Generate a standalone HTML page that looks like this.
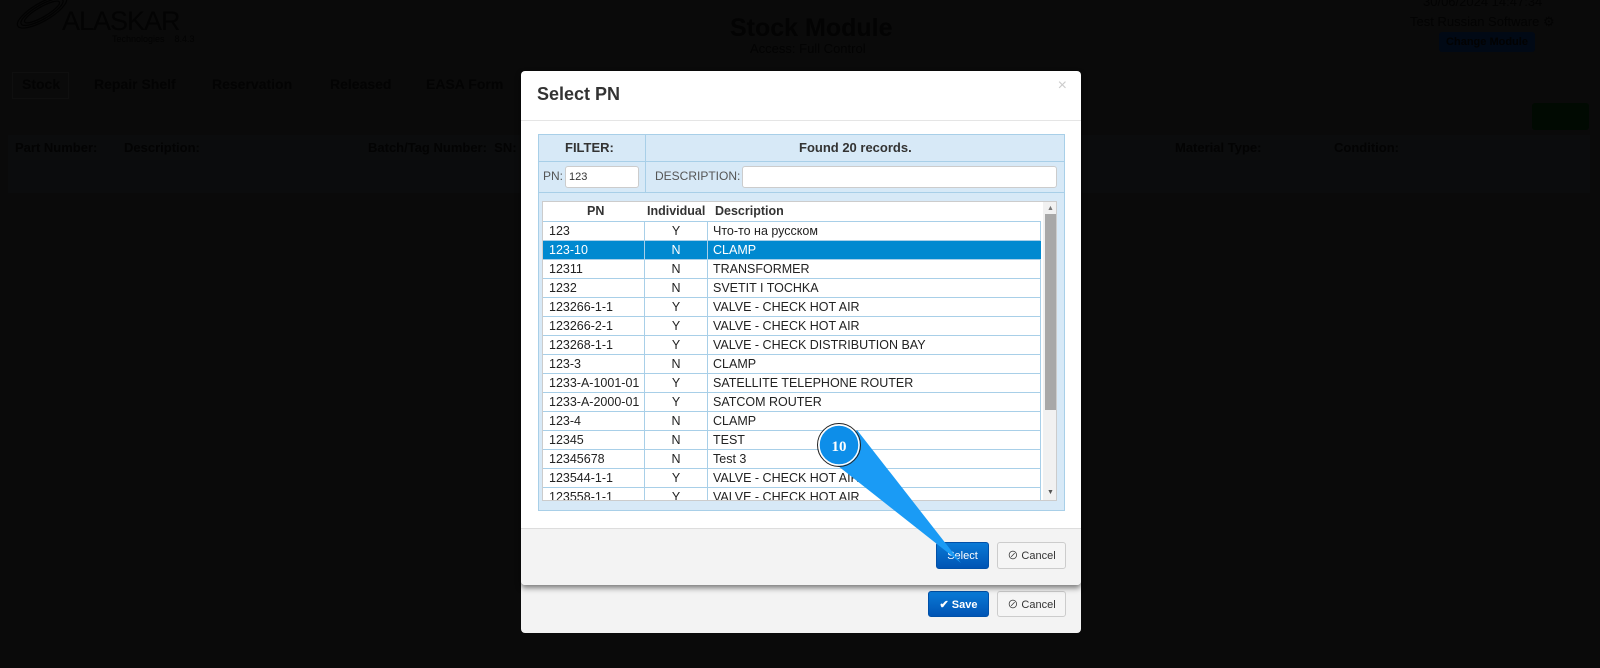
<!DOCTYPE html>
<html><head><meta charset="utf-8"><style>
*{box-sizing:border-box;margin:0;padding:0}
body{width:1600px;height:668px;background:#0a0a0a;font-family:"Liberation Sans","Noto Sans CJK SC",sans-serif;position:relative;overflow:hidden;color:#333}
.a{position:absolute}
.bg{color:#030303}
.modal{position:absolute;left:521px;width:560px;background:#fff;border-radius:4px}
.grid{position:absolute;left:542px;top:201px;width:515px;height:300px;background:#fff;border:1px solid #ccc;overflow:hidden}
.row{position:absolute;left:0;height:19px;width:498px;font-size:12.5px;color:#222;border-bottom:1px solid #a8cfe8}
.row span{position:absolute;top:2px}
.row .c1{left:6px}.row .c2{left:102px;width:62px;text-align:center}.row .c3{left:170px}
.row .v1{position:absolute;left:101px;top:0;bottom:0;border-left:1px solid #a8cfe8}
.row .v2{position:absolute;left:164px;top:0;bottom:0;border-left:1px solid #a8cfe8}
.sel{background:#0089d0;color:#fff}
.btn{position:absolute;font-size:11px;border-radius:3px;text-align:center;line-height:26px}
.tab{position:absolute;top:76px;font-size:14px;font-weight:bold;color:#030303}
</style></head><body>
<svg class="a" style="left:12px;top:0" width="70" height="30"><g fill="none" stroke="#020202" stroke-width="1.2"><ellipse cx="30" cy="12" rx="28" ry="9" transform="rotate(-30 30 12)"/><ellipse cx="30" cy="12" rx="24" ry="7" transform="rotate(-30 30 12)"/><ellipse cx="30" cy="12" rx="20" ry="5" transform="rotate(-30 30 12)"/></g></svg>
<div class="a bg" style="left:62px;top:6px;font-size:27px;letter-spacing:-1px">ALASKAR</div>
<div class="a bg" style="left:112px;top:34px;font-size:9px">Technologies &nbsp;&nbsp; 8.4.3</div>
<div class="a bg" style="left:730px;top:14px;font-size:25px;font-weight:bold">Stock Module</div>
<div class="a bg" style="left:750px;top:41px;font-size:13px">Access: Full Control</div>
<div class="a bg" style="left:1423px;top:-6px;font-size:13px">30/06/2024 14:47:34</div>
<div class="a bg" style="left:1410px;top:14px;font-size:13px">Test Russian Software ⚙</div>
<div class="a" style="left:1439px;top:32px;width:96px;height:20px;background:#010915;border-radius:3px;color:#020202;font-size:11px;font-weight:bold;text-align:center;line-height:20px">Change Module</div>
<div class="a" style="left:12px;top:72px;width:57px;height:27px;border:1px solid #0f0f0f"></div>
<div class="tab" style="left:22px">Stock</div>
<div class="tab" style="left:94px">Repair Shelf</div>
<div class="tab" style="left:212px">Reservation</div>
<div class="tab" style="left:330px">Released</div>
<div class="tab" style="left:426px">EASA Form</div>
<div class="a" style="left:1532px;top:103px;width:57px;height:27px;background:#010a02;border-radius:3px"></div>
<div class="a" style="left:8px;top:135px;width:1582px;height:58px;background:#0b0c0d"></div>
<div class="a bg" style="left:15px;top:140px;font-size:13px;font-weight:bold">Part Number:</div>
<div class="a bg" style="left:124px;top:140px;font-size:13px;font-weight:bold">Description:</div>
<div class="a bg" style="left:368px;top:140px;font-size:13px;font-weight:bold">Batch/Tag Number:&nbsp; SN:</div>
<div class="a bg" style="left:1175px;top:140px;font-size:13px;font-weight:bold">Material Type:</div>
<div class="a bg" style="left:1334px;top:140px;font-size:13px;font-weight:bold">Condition:</div>

<div class="modal" style="top:560px;height:73px;background:#f3f3f3"></div>
<div class="btn" style="left:928px;top:591px;width:61px;height:26px;background:linear-gradient(#0a7ad6,#0054b4);color:#fff;font-weight:bold;border:1px solid #0050a8">✔ Save</div>
<div class="btn" style="left:997px;top:591px;width:69px;height:26px;background:#f5f5f5;border:1px solid #ccc;color:#333">⊘ Cancel</div>

<div class="modal" style="top:71px;height:514px;box-shadow:0 3px 6px rgba(0,0,0,.5)">
 <div class="a" style="left:16px;top:13px;font-size:18px;font-weight:bold;color:#333">Select PN</div>
 <div class="a" style="right:14px;top:6px;font-size:16px;color:#ccc">×</div>
 <div class="a" style="left:0;right:0;top:49px;border-top:1px solid #e5e5e5"></div>
 <div class="a" style="left:0;right:0;top:457px;bottom:0;background:#f3f3f3;border-top:1px solid #ddd;border-radius:0 0 4px 4px"></div>
</div>
<div class="a" style="left:538px;top:134px;width:527px;height:377px;background:#d7e9f7;border:1px solid #a8cfe8"></div>
<div class="a" style="left:538px;top:161px;width:527px;border-top:1px solid #a8cfe8"></div>
<div class="a" style="left:538px;top:192px;width:527px;border-top:1px solid #a8cfe8"></div>
<div class="a" style="left:645px;top:134px;height:58px;border-left:1px solid #a8cfe8"></div>
<div class="a" style="left:565px;top:140px;font-size:13px;font-weight:bold;color:#333">FILTER:</div>
<div class="a" style="left:799px;top:140px;font-size:13px;font-weight:bold;color:#333">Found 20 records.</div>
<div class="a" style="left:543px;top:169px;font-size:12px;color:#555">PN:</div>
<div class="a" style="left:565px;top:166px;width:74px;height:22px;background:#fff;border:1px solid #ccc;border-radius:3px;font-size:11px;padding:4px 3px;color:#333">123</div>
<div class="a" style="left:655px;top:169px;font-size:12px;color:#555">DESCRIPTION:</div>
<div class="a" style="left:742px;top:166px;width:315px;height:22px;background:#fff;border:1px solid #ccc;border-radius:3px"></div>

<div class="grid">
 <div class="a" style="left:0;top:0;width:498px;height:19px;font-size:12.5px;font-weight:bold;color:#333"><span class="a" style="left:44px;top:2px">PN</span><span class="a" style="left:104px;top:2px">Individual</span><span class="a" style="left:172px;top:2px">Description</span></div>
 <div class="a" style="left:500px;top:0;width:15px;height:300px;background:#f1f1f1"></div>
 <div class="a" style="left:502px;top:12px;width:11px;height:196px;background:#a8a8a8"></div>
 <div class="a" style="left:504px;top:3px;font-size:7px;color:#777">▲</div>
 <div class="a" style="left:504px;top:287px;font-size:7px;color:#555">▼</div>
 <div class="a" style="left:0;top:19px;width:498px;height:281px;border-top:1px solid #a8cfe8;border-right:1px solid #a8cfe8"></div>
 <div class="row" style="top:20px"><i class="v1"></i><i class="v2"></i><span class="c1">123</span><span class="c2">Y</span><span class="c3">Что-то на русском</span></div>
 <div class="row sel" style="top:39px"><i class="v1"></i><i class="v2"></i><span class="c1">123-10</span><span class="c2">N</span><span class="c3">CLAMP</span></div>
 <div class="row" style="top:58px"><i class="v1"></i><i class="v2"></i><span class="c1">12311</span><span class="c2">N</span><span class="c3">TRANSFORMER</span></div>
 <div class="row" style="top:77px"><i class="v1"></i><i class="v2"></i><span class="c1">1232</span><span class="c2">N</span><span class="c3">SVETIT I TOCHKA</span></div>
 <div class="row" style="top:96px"><i class="v1"></i><i class="v2"></i><span class="c1">123266-1-1</span><span class="c2">Y</span><span class="c3">VALVE - CHECK HOT AIR</span></div>
 <div class="row" style="top:115px"><i class="v1"></i><i class="v2"></i><span class="c1">123266-2-1</span><span class="c2">Y</span><span class="c3">VALVE - CHECK HOT AIR</span></div>
 <div class="row" style="top:134px"><i class="v1"></i><i class="v2"></i><span class="c1">123268-1-1</span><span class="c2">Y</span><span class="c3">VALVE - CHECK DISTRIBUTION BAY</span></div>
 <div class="row" style="top:153px"><i class="v1"></i><i class="v2"></i><span class="c1">123-3</span><span class="c2">N</span><span class="c3">CLAMP</span></div>
 <div class="row" style="top:172px"><i class="v1"></i><i class="v2"></i><span class="c1">1233-A-1001-01</span><span class="c2">Y</span><span class="c3">SATELLITE TELEPHONE ROUTER</span></div>
 <div class="row" style="top:191px"><i class="v1"></i><i class="v2"></i><span class="c1">1233-A-2000-01</span><span class="c2">Y</span><span class="c3">SATCOM ROUTER</span></div>
 <div class="row" style="top:210px"><i class="v1"></i><i class="v2"></i><span class="c1">123-4</span><span class="c2">N</span><span class="c3">CLAMP</span></div>
 <div class="row" style="top:229px"><i class="v1"></i><i class="v2"></i><span class="c1">12345</span><span class="c2">N</span><span class="c3">TEST</span></div>
 <div class="row" style="top:248px"><i class="v1"></i><i class="v2"></i><span class="c1">12345678</span><span class="c2">N</span><span class="c3">Test 3</span></div>
 <div class="row" style="top:267px"><i class="v1"></i><i class="v2"></i><span class="c1">123544-1-1</span><span class="c2">Y</span><span class="c3">VALVE - CHECK HOT AIR</span></div>
 <div class="row" style="top:286px"><i class="v1"></i><i class="v2"></i><span class="c1">123558-1-1</span><span class="c2">Y</span><span class="c3">VALVE - CHECK HOT AIR</span></div>
</div>

<div class="btn" style="left:936px;top:542px;width:53px;height:27px;background:linear-gradient(#0a7ad6,#0054b4);color:#fff;border:1px solid #0050a8">Select</div>
<div class="btn" style="left:997px;top:542px;width:69px;height:27px;background:#f5f5f5;border:1px solid #ccc;color:#333">⊘ Cancel</div>

<svg class="a" style="left:0;top:0" width="1600" height="668">
 <polygon points="857,430 833,462 961,563" fill="#1a9bf5"/>
 <circle cx="839" cy="445" r="20" fill="#0d8ee9" stroke="#fff" stroke-width="1.5"/>
 <circle cx="839" cy="445" r="21.5" fill="none" stroke="#222" stroke-width="1"/>
 <text x="839" y="451" text-anchor="middle" font-family="Liberation Serif,serif" font-weight="bold" font-size="15" fill="#fff">10</text>
</svg>
</body></html>
